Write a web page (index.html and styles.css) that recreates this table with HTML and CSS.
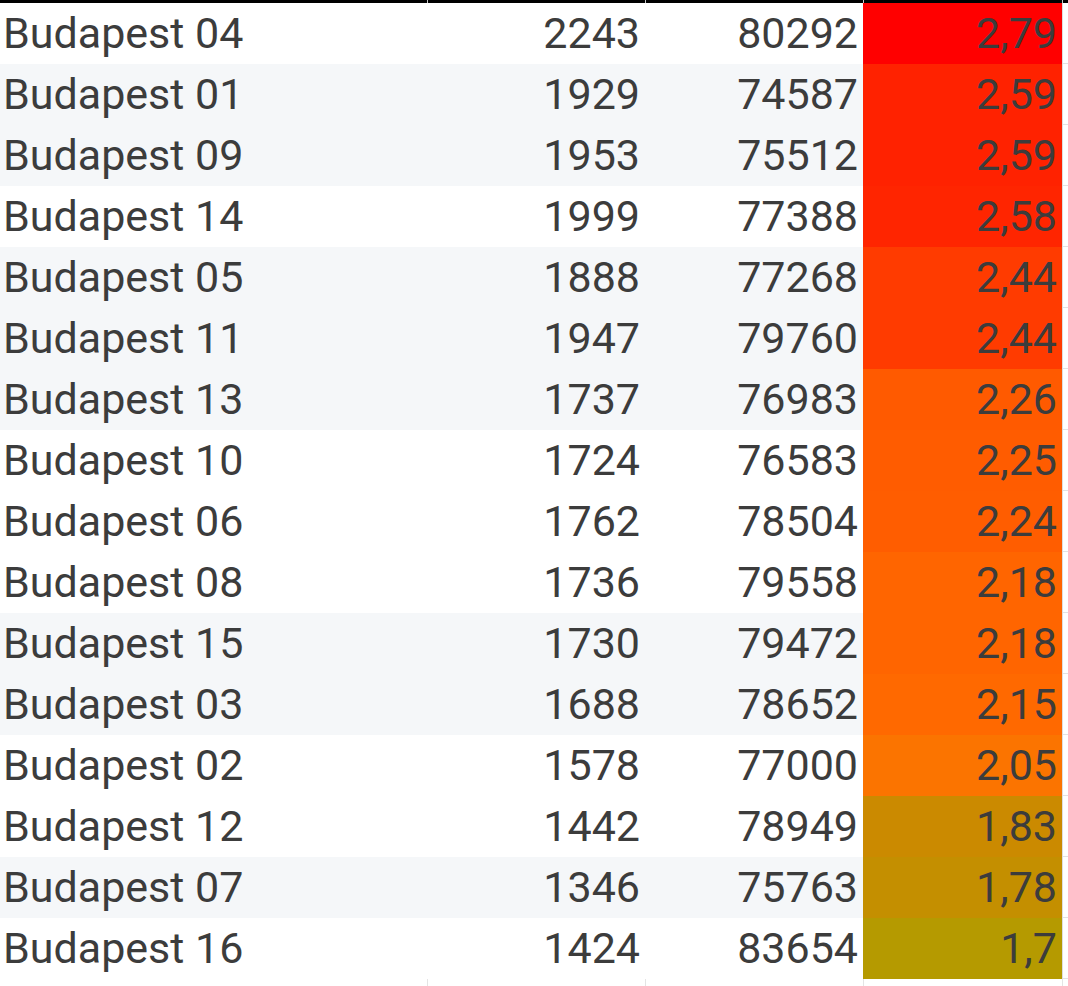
FILE: index.html
```html
<!DOCTYPE html>
<html>
<head>
<meta charset="utf-8">
<link rel="stylesheet" href="styles.css">
</head>
<body>
<table class="grid">
  <colgroup>
    <col class="c-name"><col class="c-num"><col class="c-num"><col class="c-heat"><col class="c-rest">
  </colgroup>
  <thead>
    <tr class="topbar"><th></th><th></th><th></th><th></th><th class="rest"></th></tr>
  </thead>
  <tbody>
    <tr><td class="name">Budapest 04</td><td class="num">2243</td><td class="num">80292</td><td class="heat" style="background:#ff0000">2,79</td><td class="rest"></td></tr>
    <tr class="alt"><td class="name">Budapest 01</td><td class="num">1929</td><td class="num">74587</td><td class="heat" style="background:#ff2200">2,59</td><td class="rest"></td></tr>
    <tr class="alt"><td class="name">Budapest 09</td><td class="num">1953</td><td class="num">75512</td><td class="heat" style="background:#ff2200">2,59</td><td class="rest"></td></tr>
    <tr><td class="name">Budapest 14</td><td class="num">1999</td><td class="num">77388</td><td class="heat" style="background:#ff2500">2,58</td><td class="rest"></td></tr>
    <tr class="alt"><td class="name">Budapest 05</td><td class="num">1888</td><td class="num">77268</td><td class="heat" style="background:#ff3b00">2,44</td><td class="rest"></td></tr>
    <tr class="alt"><td class="name">Budapest 11</td><td class="num">1947</td><td class="num">79760</td><td class="heat" style="background:#ff3b00">2,44</td><td class="rest"></td></tr>
    <tr class="alt"><td class="name">Budapest 13</td><td class="num">1737</td><td class="num">76983</td><td class="heat" style="background:#ff5a00">2,26</td><td class="rest"></td></tr>
    <tr><td class="name">Budapest 10</td><td class="num">1724</td><td class="num">76583</td><td class="heat" style="background:#ff5c00">2,25</td><td class="rest"></td></tr>
    <tr><td class="name">Budapest 06</td><td class="num">1762</td><td class="num">78504</td><td class="heat" style="background:#ff5d00">2,24</td><td class="rest"></td></tr>
    <tr><td class="name">Budapest 08</td><td class="num">1736</td><td class="num">79558</td><td class="heat" style="background:#ff6500">2,18</td><td class="rest"></td></tr>
    <tr class="alt"><td class="name">Budapest 15</td><td class="num">1730</td><td class="num">79472</td><td class="heat" style="background:#ff6500">2,18</td><td class="rest"></td></tr>
    <tr class="alt"><td class="name">Budapest 03</td><td class="num">1688</td><td class="num">78652</td><td class="heat" style="background:#ff6900">2,15</td><td class="rest"></td></tr>
    <tr><td class="name">Budapest 02</td><td class="num">1578</td><td class="num">77000</td><td class="heat" style="background:#fb7400">2,05</td><td class="rest"></td></tr>
    <tr><td class="name">Budapest 12</td><td class="num">1442</td><td class="num">78949</td><td class="heat" style="background:#cb8a00">1,83</td><td class="rest"></td></tr>
    <tr class="alt"><td class="name">Budapest 07</td><td class="num">1346</td><td class="num">75763</td><td class="heat" style="background:#c48f00">1,78</td><td class="rest"></td></tr>
    <tr><td class="name">Budapest 16</td><td class="num">1424</td><td class="num">83654</td><td class="heat" style="background:#b59a00">1,7</td><td class="rest"></td></tr>
  </tbody>
  <tfoot>
    <tr class="foot"><td></td><td></td><td></td><td></td><td class="rest"></td></tr>
  </tfoot>
</table>
</body>
</html>
```

FILE: styles.css
```css
html, body {
  margin: 0;
  padding: 0;
  background: #ffffff;
}

.grid {
  border-collapse: collapse;
  table-layout: fixed;
  width: 1068px;
  font-family: Roboto, "Noto Sans", sans-serif;
  font-size: 43px;
  color: #3c3c3c;
}

.c-name { width: 427px; }
.c-num { width: 218px; }
.c-heat { width: 199px; }
.c-rest { width: 6px; }

.topbar th {
  height: 3px;
  padding: 0;
  background: #000000;
  border-left: 1px solid #c8c8c8;
}
.topbar th:first-child { border-left: none; }

tbody tr td {
  height: 61px;
  padding: 0;
  line-height: 61px;
  white-space: nowrap;
  overflow: hidden;
}

tbody tr.alt td { background: #f5f7f9; }
tbody tr td.rest {
  background: #ffffff;
  box-shadow: inset 1px 0 #dddddd, inset 0 -1px #e2e2e2;
}

.name {
  text-align: left;
  padding-left: 3px !important;
}

.num, .heat {
  text-align: right;
  padding-right: 5px !important;
}

.foot td {
  height: 7px;
  padding: 0;
  border-left: 1px solid #e4e4e4;
}
.foot td:first-child { border-left: none; }
```
